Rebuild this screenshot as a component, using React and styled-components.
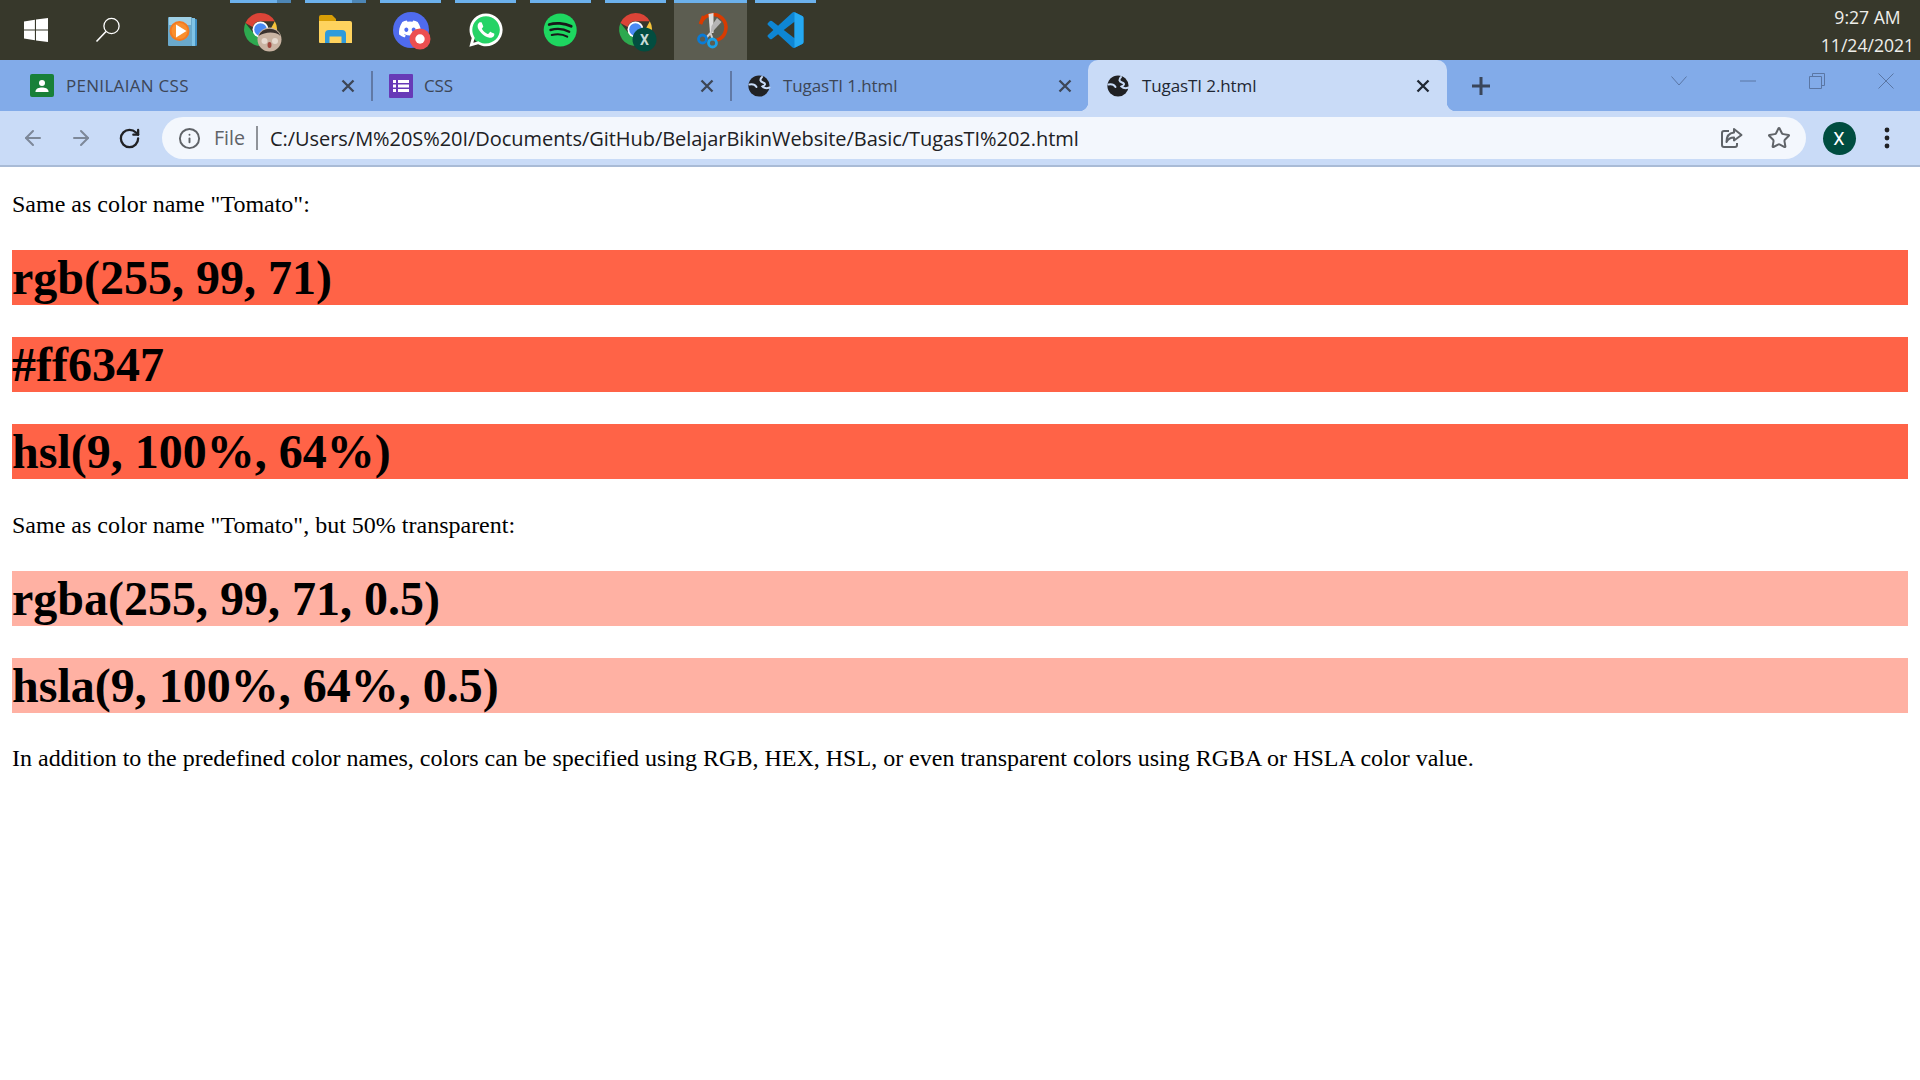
import React from "react";
import styled, { createGlobalStyle } from "styled-components";
import { ArrowLeft, ArrowRight, RotateCw, Info, Star } from "lucide-react";
import { FaWhatsapp, FaDiscord } from "react-icons/fa";

const Global = createGlobalStyle`
  html, body { margin: 0; padding: 0; background: #fff; }
  body { overflow: hidden; }
  * { box-sizing: border-box; }
`;

const Screen = styled.div`
  width: 1920px;
  height: 1080px;
  display: flex;
  flex-direction: column;
  overflow: hidden;
`;

/* ---------- Taskbar ---------- */
const Taskbar = styled.div`
  height: 60px;
  flex: none;
  display: flex;
  background: #37382b;
`;
const TaskCell = styled.div`
  position: relative;
  width: ${(p) => p.$w || 75}px;
  flex: none;
  display: flex;
  align-items: center;
  justify-content: center;
`;
const Running = styled.div`
  position: absolute;
  top: 0;
  left: ${(p) => (p.$active ? 0 : 7)}px;
  right: ${(p) => (p.$active ? 0 : 7)}px;
  height: 3px;
  background: ${(p) =>
    p.$stack
      ? "linear-gradient(90deg, #6cb1ec 0 47px, #4d86b5 47px)"
      : "#6cb1ec"};
`;
const ActiveCell = styled(TaskCell)`
  width: 73px;
  margin-right: 1px;
  margin-left: 1px;
  background: #5c5d51;
`;
const Clock = styled.div`
  margin-left: auto;
  width: 105px;
  padding-top: 3px;
  font: 17.6px/28px "Open Sans", "Noto Sans", sans-serif;
  color: #eeeeea;
  text-align: center;
  white-space: nowrap;
`;

/* ---------- Tab strip ---------- */
const TabStrip = styled.div`
  height: 51px;
  flex: none;
  display: flex;
  padding-left: 11px;
  background: #82abe9;
`;
const Tab = styled.div`
  position: relative;
  width: 359px;
  flex: none;
  display: flex;
  align-items: center;
  padding: 0 ${(p) => p.$endPad || 16}px 0 19px;
  color: ${(p) => (p.$active ? "#1f2733" : "#3d4656")};
  background: ${(p) => (p.$active ? "#c9dbf7" : "transparent")};
  border-radius: ${(p) => (p.$active ? "10px 10px 0 0" : "0")};
  &::before {
    content: "";
    display: ${(p) => (p.$active ? "block" : "none")};
    position: absolute;
    left: -9px;
    bottom: 0;
    width: 9px;
    height: 9px;
    background: radial-gradient(circle at 0 0, transparent 9px, #c9dbf7 9.5px);
  }
  &::after {
    content: "";
    display: ${(p) => (p.$active || p.$sep ? "block" : "none")};
    position: absolute;
    ${(p) =>
      p.$active
        ? `right: -9px; bottom: 0; width: 9px; height: 9px;
           background: radial-gradient(circle at 100% 0, transparent 9px, #c9dbf7 9.5px);`
        : `right: -3px; top: 11px; width: 2px; height: 30px; background: #6079a6;`}
  }
`;
const Favicon = styled.svg`
  width: 24px;
  height: 24px;
  flex: none;
  margin-right: ${(p) => p.$gap || 11}px;
`;
const TabTitle = styled.span`
  flex: 1;
  font: 17px/24px "Open Sans", "Noto Sans", sans-serif;
  letter-spacing: ${(p) => (p.$caps ? "0.3px" : "-0.1px")};
  white-space: nowrap;
`;
const TabClose = styled.svg`
  width: 14px;
  height: 14px;
  flex: none;
`;
const NewTab = styled.div`
  width: 34px;
  margin-left: 17px;
  display: flex;
  align-items: center;
  justify-content: center;
`;
const WinControls = styled.div`
  margin-left: auto;
  display: flex;
  height: 42px;
`;
const WinButton = styled.div`
  width: 69px;
  display: flex;
  align-items: center;
  justify-content: center;
`;

/* ---------- Toolbar ---------- */
const Toolbar = styled.div`
  height: 56px;
  flex: none;
  display: flex;
  align-items: center;
  padding: 0 9px;
  background: #c9dbf7;
  border-bottom: 2px solid #a9bbd6;
`;
const NavButton = styled.div`
  width: 48px;
  height: 42px;
  flex: none;
  display: flex;
  align-items: center;
  justify-content: center;
  color: ${(p) => p.$color || "#202124"};
`;
const Omnibox = styled.div`
  flex: 1;
  height: 42px;
  margin: 0 9px;
  padding: 0 3px 0 14px;
  display: flex;
  align-items: center;
  background: #f3f7fd;
  border-radius: 21px;
`;
const InfoSlot = styled.div`
  width: 26px;
  flex: none;
  display: flex;
  justify-content: center;
  color: #5f6368;
`;
const Scheme = styled.span`
  margin-left: 12px;
  padding-right: 11px;
  border-right: 2px solid #8f9399;
  font: 19.6px/24px "Open Sans", "Noto Sans", sans-serif;
  color: #5f6368;
`;
const Url = styled.span`
  flex: 1;
  margin-left: 12px;
  padding-top: 1px;
  font: 20px/24px "Open Sans", "Noto Sans", sans-serif;
  letter-spacing: -0.05px;
  color: #202124;
  white-space: nowrap;
`;
const Avatar = styled.div`
  width: 33px;
  height: 33px;
  border-radius: 50%;
  background: #004d40;
  color: #fff;
  display: flex;
  align-items: center;
  justify-content: center;
  font: 18px Roboto, "Liberation Sans", sans-serif;
`;

/* ---------- Page ---------- */
const Page = styled.main`
  flex: 1;
  padding: 23.5px 12px 0;
  background: #fff;
  color: #000;
  font-family: "Liberation Serif", "Times New Roman", serif;
`;
const Para = styled.p`
  margin: ${(p) => (p.$first ? "0 0 32px" : p.$tall ? "32px 0 31.5px" : "32px 0")};
  font-size: 24px;
  line-height: ${(p) => (p.$tall ? "28px" : "27.5px")};
`;
const ColorHeading = styled.h1`
  margin: 32px 0;
  font-size: 48px;
  font-weight: 700;
  line-height: 55px;
  background: ${(p) => p.$bg};
`;

/* ---------- Drawings ---------- */
const IconSvg = styled.svg`
  width: 48px;
  height: 44px;
  flex: none;
  overflow: visible;
`;
const I = ({ children }) => <IconSvg viewBox="0 0 48 44">{children}</IconSvg>;

const WindowsIcon = () => (
  <svg width="24" height="24" viewBox="0 0 24 24">
    <path fill="#fff" d="M0 3.4 10.9 1.7V11.4H0zM12 1.5 24 0V11.4H12zM0 12.6H10.9V22.3L0 20.6zM12 12.6H24V24L12 22.5z" />
  </svg>
);
const SearchIcon = () => (
  <svg width="26" height="26" viewBox="0 0 26 26">
    <circle cx="16.5" cy="9" r="7.6" fill="none" stroke="#fff" strokeWidth="1.3" />
    <path d="M11 14.5 1.5 24.5" stroke="#fff" strokeWidth="1.6" />
  </svg>
);
const WmpIcon = () => (
  <I>
    <g transform="translate(-2 0)">
      <rect x="31" y="11" width="8" height="27" rx="1" fill="#3f8fc4" />
      <rect x="34" y="10" width="3" height="28" fill="#7fc3e6" />
      <rect x="10" y="9" width="24" height="29" rx="1" fill="#6aa9cc" />
      <rect x="11" y="9" width="22" height="8" fill="#9fd0e6" />
      <circle cx="21.5" cy="23" r="10" fill="#f47a20" />
      <circle cx="21.5" cy="23" r="8" fill="#f98f2e" />
      <path d="M18 16.5 28.5 23 18 29.5z" fill="#fff" />
    </g>
  </I>
);
const ChromeBase = () => (
  <>
    <path d="M23.5 5A16.5 16.5 0 0 1 37.8 13.2H23.5A8.3 8.3 0 0 0 15.6 19L8.4 15A16.5 16.5 0 0 1 23.5 5z" fill="#db4437" />
    <path d="M37.8 13.2A16.5 16.5 0 0 1 25 38L32 24z" fill="#f6c33a" />
    <path d="M8.4 15A16.5 16.5 0 0 0 25 38L30 27 23.5 30 15.6 24z" fill="#2da94f" />
    <circle cx="23.5" cy="21.5" r="8" fill="#fff" />
    <circle cx="23.5" cy="21.5" r="6.3" fill="#4a8af4" />
  </>
);
const ChromeFace = () => (
  <I>
    <ChromeBase />
    <circle cx="32.5" cy="31.5" r="12" fill="#c9b4a3" />
    <path d="M21.5 28A12 12 0 0 1 43.5 28C38 23 28 24 21.5 28z" fill="#3a322e" />
    <circle cx="27.5" cy="33" r="3" fill="#e6dad0" />
    <circle cx="38" cy="33" r="3" fill="#e6dad0" />
    <ellipse cx="32.5" cy="37" rx="2" ry="3" fill="#a0483e" />
  </I>
);
const ChromeX = () => (
  <I>
    <ChromeBase />
    <circle cx="32.5" cy="31.5" r="12" fill="#024d40" />
    <text x="32.5" y="36.5" textAnchor="middle" fontFamily="Roboto, sans-serif" fontWeight="700" fontSize="14" fill="#c7dcd7">X</text>
  </I>
);
const FolderIcon = () => (
  <I>
    <path d="M7 9A2 2 0 0 1 9 7H20L24 11V20H7z" fill="#d89e06" />
    <path d="M7 13H38A2 2 0 0 1 40 15V35H8A1 1 0 0 1 7 34z" fill="#ffd35e" />
    <path d="M13 35V26A4 4 0 0 1 17 22H30A4 4 0 0 1 34 26V35H29.5V28.5H17.5V35z" fill="#2f9bdc" />
  </I>
);
const DiscordIcon = () => (
  <I>
    <circle cx="24" cy="22" r="18" fill="#4f6bee" />
    <FaDiscord x="11" y="9" size="24" color="#fff" />
    <circle cx="33" cy="31" r="10.5" fill="#ec4f50" />
    <circle cx="33" cy="31" r="4.7" fill="#fff" />
  </I>
);
const WhatsappIcon = () => (
  <I>
    <circle cx="24" cy="22" r="15" fill="#25d366" />
    <FaWhatsapp x="5" y="3" size="38" color="#fff" />
  </I>
);
const SpotifyIcon = () => (
  <I>
    <g transform="translate(-0.8 0)">
      <circle cx="24" cy="22" r="16.5" fill="#1ed760" />
      <g fill="none" stroke="#18181a" strokeLinecap="round">
        <path d="M13 16.5C19 14.6 28 14.8 35 18.3" strokeWidth="2.8" />
        <path d="M14.3 22C20 20.4 27.5 20.8 33 23.8" strokeWidth="2.4" />
        <path d="M15.5 27C20.5 25.8 26.5 26 31 28.7" strokeWidth="2" />
      </g>
    </g>
  </I>
);
const SnipIcon = () => (
  <I>
    <path d="M13.5 16A13 13 0 1 1 30 32" fill="none" stroke="#d83b01" strokeWidth="3.6" />
    <path d="M13.5 16 16.5 8" stroke="#d83b01" strokeWidth="3.4" />
    <path d="M23 25 21.5 6 26.5 5 26.5 25z" fill="#dedede" />
    <path d="M23.5 26 34.5 14 30 10 24.5 18z" fill="#b5b5b5" />
    <path d="M23.5 25 19 30M23.5 25 26 32" stroke="#cfcfcf" strokeWidth="2" />
    <circle cx="15.5" cy="31" r="4" fill="none" stroke="#0a7bd6" strokeWidth="2.8" />
    <circle cx="25.5" cy="35" r="4" fill="none" stroke="#1ba1e8" strokeWidth="2.8" />
  </I>
);
const VscodeIcon = () => (
  <I>
    <g transform="translate(5.5 4) scale(1.5)">
      <path fill="#0e86d4" d="M23.15 2.587L18.21.21a1.494 1.494 0 0 0-1.705.29l-9.46 8.63-4.12-3.128a.999.999 0 0 0-1.276.057L.327 7.261A1 1 0 0 0 .326 8.74L3.899 12 .326 15.26a1 1 0 0 0 .001 1.479L1.65 17.94a.999.999 0 0 0 1.276.057l4.12-3.128 9.46 8.63a1.492 1.492 0 0 0 1.704.29l4.942-2.377A1.5 1.5 0 0 0 24 20.06V3.939a1.5 1.5 0 0 0-.85-1.352zm-5.146 14.861L10.826 12l7.178-5.448v10.896z" />
      <path fill="#25a9f2" d="M18 .1l5.15 2.487A1.5 1.5 0 0 1 24 3.939V20.06a1.5 1.5 0 0 1-.85 1.352L18 23.9z" />
    </g>
  </I>
);

const ClassroomFav = () => (
  <Favicon viewBox="0 0 24 24" $gap={12}>
    <rect width="24" height="23" rx="2" fill="#188038" />
    <circle cx="12" cy="9" r="3" fill="#fff" />
    <path d="M5.5 17C6 14.3 9 13.4 12 13.4S18 14.3 18.5 17V18H5.5z" fill="#fff" />
  </Favicon>
);
const FormsFav = () => (
  <Favicon viewBox="0 0 24 24">
    <rect width="24" height="24" rx="1" fill="#673ab7" />
    <path d="M4 6h3v3H4zM9 6h11v3H9zM4 10.5h3v3H4zM9 10.5h11v3H9zM4 15h3v3H4zM9 15h11v3H9z" fill="#fff" />
  </Favicon>
);
const GlobeFav = () => (
  <Favicon viewBox="0 0 24 24">
    <circle cx="11" cy="12" r="10.6" fill="#202124" />
    <g fill="none" stroke="#c9dbf7" strokeWidth="2" strokeLinecap="round">
      <path d="M1.5 10.5C4 10 7 10.5 8.5 13" />
      <path d="M14 3C11.5 5.5 12 7.5 15 8.5 18 9.5 17.5 11 14.5 12.5 16.5 14.5 19 14.5 21.5 13.5" />
    </g>
  </Favicon>
);
const CloseGlyph = () => (
  <TabClose viewBox="0 0 14 14">
    <path d="M1.5 1.5 12.5 12.5M12.5 1.5 1.5 12.5" stroke="currentColor" strokeWidth="2.3" />
  </TabClose>
);

const ThinStroke = "#5a76a4";

export default function App() {
  return (
    <Screen>
      <Global />
      <Taskbar>
        <TaskCell $w={72}><WindowsIcon /></TaskCell>
        <TaskCell $w={72}><SearchIcon /></TaskCell>
        <TaskCell $w={79}><WmpIcon /></TaskCell>
        <TaskCell><Running $stack /><ChromeFace /></TaskCell>
        <TaskCell><Running $stack /><FolderIcon /></TaskCell>
        <TaskCell><Running /><DiscordIcon /></TaskCell>
        <TaskCell><Running /><WhatsappIcon /></TaskCell>
        <TaskCell><Running /><SpotifyIcon /></TaskCell>
        <TaskCell><Running /><ChromeX /></TaskCell>
        <ActiveCell><Running $active /><SnipIcon /></ActiveCell>
        <TaskCell><Running /><VscodeIcon /></TaskCell>
        <Clock>9:27 AM<br />11/24/2021</Clock>
      </Taskbar>

      <TabStrip>
        <Tab $sep $endPad={15}><ClassroomFav /><TabTitle $caps>PENILAIAN CSS</TabTitle><CloseGlyph /></Tab>
        <Tab $sep $endPad={15}><FormsFav /><TabTitle>CSS</TabTitle><CloseGlyph /></Tab>
        <Tab><GlobeFav /><TabTitle>TugasTI 1.html</TabTitle><CloseGlyph /></Tab>
        <Tab $active $endPad={17}><GlobeFav /><TabTitle>TugasTI 2.html</TabTitle><CloseGlyph /></Tab>
        <NewTab>
          <svg width="20" height="20" viewBox="0 0 20 20">
            <path d="M10 1V19M1 10H19" stroke="#3a465a" strokeWidth="3" />
          </svg>
        </NewTab>
        <WinControls>
          <WinButton>
            <svg width="16" height="10" viewBox="0 0 16 10"><path d="M.5.5 8 9 15.5.5" fill="none" stroke={ThinStroke} /></svg>
          </WinButton>
          <WinButton>
            <svg width="16" height="2" viewBox="0 0 16 2"><path d="M0 1H16" stroke={ThinStroke} /></svg>
          </WinButton>
          <WinButton>
            <svg width="16" height="16" viewBox="0 0 16 16"><path d="M.5 3.5H12.5V15.5H.5zM3.5 3.5V.5H15.5V12.5H12.5" fill="none" stroke={ThinStroke} /></svg>
          </WinButton>
          <WinButton>
            <svg width="16" height="16" viewBox="0 0 16 16"><path d="M.5.5 15.5 15.5M15.5.5.5 15.5" stroke={ThinStroke} /></svg>
          </WinButton>
        </WinControls>
      </TabStrip>

      <Toolbar>
        <NavButton $color="#7d8899"><ArrowLeft size={24} strokeWidth={2} /></NavButton>
        <NavButton $color="#7d8899"><ArrowRight size={24} strokeWidth={2} /></NavButton>
        <NavButton><RotateCw size={23} strokeWidth={2.4} /></NavButton>
        <Omnibox>
          <InfoSlot><Info size={23} strokeWidth={2} /></InfoSlot>
          <Scheme>File</Scheme>
          <Url>C:/Users/M%20S%20I/Documents/GitHub/BelajarBikinWebsite/Basic/TugasTI%202.html</Url>
          <NavButton $color="#5f6368">
            <svg width="24" height="24" viewBox="0 0 24 24" fill="none" stroke="currentColor" strokeWidth="2">
              <path d="M10 5H5A2 2 0 0 0 3 7V19A2 2 0 0 0 5 21H16A2 2 0 0 0 18 19V17" />
              <path d="M15 3 22.5 9 15 14.5V11.5C11.5 11.5 9 13 7.5 16 7.5 11 10 7 15 6.5z" strokeLinejoin="round" />
            </svg>
          </NavButton>
          <NavButton $color="#5f6368"><Star size={24} strokeWidth={2} /></NavButton>
        </Omnibox>
        <NavButton><Avatar>X</Avatar></NavButton>
        <NavButton>
          <svg width="6" height="22" viewBox="0 0 6 22"><g fill="#202124"><circle cx="3" cy="3" r="2.4" /><circle cx="3" cy="11" r="2.4" /><circle cx="3" cy="19" r="2.4" /></g></svg>
        </NavButton>
      </Toolbar>

      <Page>
        <Para $first>Same as color name "Tomato":</Para>
        <ColorHeading $bg="rgb(255, 99, 71)">rgb(255, 99, 71)</ColorHeading>
        <ColorHeading $bg="#ff6347">#ff6347</ColorHeading>
        <ColorHeading $bg="hsl(9, 100%, 64%)">hsl(9, 100%, 64%)</ColorHeading>
        <Para $tall>Same as color name "Tomato", but 50% transparent:</Para>
        <ColorHeading $bg="rgba(255, 99, 71, 0.5)">rgba(255, 99, 71, 0.5)</ColorHeading>
        <ColorHeading $bg="hsla(9, 100%, 64%, 0.5)">hsla(9, 100%, 64%, 0.5)</ColorHeading>
        <Para>In addition to the predefined color names, colors can be specified using RGB, HEX, HSL, or even transparent colors using RGBA or HSLA color value.</Para>
      </Page>
    </Screen>
  );
}
